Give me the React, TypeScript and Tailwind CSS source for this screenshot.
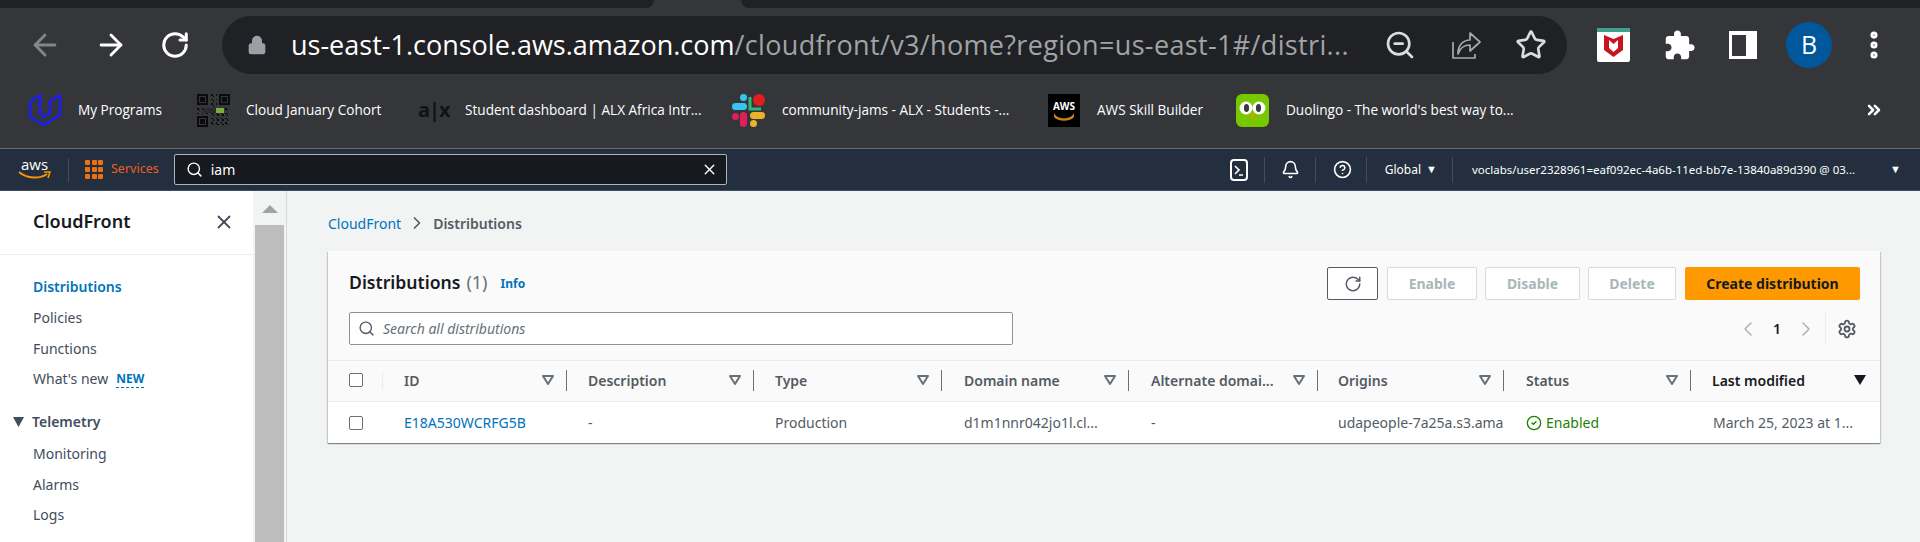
import React from 'react';
import { ArrowLeft, ArrowRight, RotateCw, Lock, ZoomOut, Star, EllipsisVertical, ChevronsRight, Search, X, Bell, CircleHelp, ChevronRight, ChevronLeft, Settings, CircleCheck } from 'lucide-react';

const UdacityIcon = () => (
  <svg width="34" height="34" viewBox="0 0 34 34" fill="none" stroke="#1a1cff" strokeWidth="2.4" strokeLinejoin="round">
    <path d="M12 2 L2 9 V24 L16 32 L32 22 V2 L22 8 V20 L16 24 L12 20 Z" />
  </svg>
);

const qrSize = 21;
const isFinder = (x: number, y: number, ox: number, oy: number) => {
  const dx = x - ox;
  const dy = y - oy;
  if (dx < 0 || dy < 0 || dx > 6 || dy > 6) return false;
  return dx === 0 || dy === 0 || dx === 6 || dy === 6 || (dx >= 2 && dx <= 4 && dy >= 2 && dy <= 4);
};

const QrIcon = () => {
  const cells: React.ReactNode[] = [];
  for (let y = 0; y < qrSize; y++) {
    for (let x = 0; x < qrSize; x++) {
      const inFinderZone = (x < 8 && y < 8) || (x > 12 && y < 8) || (x < 8 && y > 12);
      const on = inFinderZone
        ? isFinder(x, y, 0, 0) || isFinder(x, y, 14, 0) || isFinder(x, y, 0, 14)
        : (x * 7 + y * 13 + x * y) % 3 === 0;
      if (on) cells.push(<rect key={x + '-' + y} x={x} y={y} width="1" height="1" fill="#0b0b0b" />);
    }
  }
  return (
    <svg width="33" height="33" viewBox="0 0 21 21" shapeRendering="crispEdges">
      {cells}
      <rect x="4" y="9" width="8" height="3" fill="#2a2b2e" />
      <rect x="12" y="9" width="5" height="3" fill="#7fae3e" />
    </svg>
  );
};

const SlackIcon = () => (
  <svg width="33" height="33" viewBox="0 0 33 33">
    <rect x="0" y="9" width="15" height="7" rx="3.5" fill="#36c5f0" />
    <rect x="8" y="0" width="7" height="7" rx="3.5" fill="#36c5f0" />
    <circle cx="27" cy="6" r="6" fill="#e01e1e" />
    <path d="M18 3 V15 H29" fill="none" stroke="#2eb67d" strokeWidth="3" />
    <rect x="0" y="19" width="7" height="7" rx="3.5" fill="#e01e5a" />
    <rect x="8" y="18" width="7" height="15" rx="3.5" fill="#e01e5a" />
    <rect x="18" y="18" width="15" height="7" rx="3.5" fill="#ecb22e" />
    <rect x="18" y="26" width="7" height="7" rx="3.5" fill="#ecb22e" />
  </svg>
);

const SkillIcon = () => (
  <div className="w-[32px] h-[33px] bg-black flex flex-col items-center justify-center">
    <span className="text-[10px] leading-[12px] font-bold text-white">AWS</span>
    <svg width="22" height="9" viewBox="0 0 22 9"><path d="M1 1 C4 8 18 8 21 1 V5 C17 10 5 10 1 5 Z" fill="#c9821c" /></svg>
  </div>
);

const DuoIcon = () => (
  <svg width="33" height="33" viewBox="0 0 33 33">
    <rect width="33" height="33" rx="6" fill="#78c800" />
    <circle cx="10" cy="14" r="6.5" fill="#fff" />
    <circle cx="23" cy="14" r="6.5" fill="#fff" />
    <ellipse cx="10.5" cy="14" rx="2.6" ry="4" fill="#3c3c3c" />
    <ellipse cx="22.5" cy="14" rx="2.6" ry="4" fill="#3c3c3c" />
    <path d="M14 20 H19 L16.5 25 Z" fill="#f49000" />
  </svg>
);

const McAfeeIcon = () => (
  <div className="w-[33px] h-[34px] bg-white rounded-[2px] flex flex-col items-center overflow-hidden">
    <div className="w-full h-[4px] bg-[#3f9f8a]" />
    <svg width="19" height="22" viewBox="0 0 19 22" className="mt-[3px]">
      <path d="M0 0 L9.5 4 L19 0 V15 L9.5 22 L0 15 Z" fill="#c8141e" />
      <path d="M5 5 L9.5 9 L14 5 V13 L9.5 17 L5 13 Z" fill="#fff" />
    </svg>
  </div>
);

const ShareIcon = () => (
  <svg width="32" height="32" viewBox="0 0 32 32" fill="none" stroke="#a7a9ac" strokeWidth="1.7" strokeLinejoin="round">
    <path d="M3 13 V29 H25 V25" />
    <path d="M8 25 C8 15 14 11 20 11 V4 L30 13 L20 22 V16 C14 16 10 19 8 25 Z" />
  </svg>
);

const PuzzleIcon = () => (
  <svg width="33" height="33" viewBox="0 0 24 24" fill="#fff">
    <path d="M20.5 11H19V7c0-1.1-.9-2-2-2h-4V3.5C13 2.12 11.88 1 10.5 1S8 2.12 8 3.5V5H4c-1.1 0-1.99.9-1.99 2v3.8H3.5c1.49 0 2.7 1.21 2.7 2.7s-1.21 2.7-2.7 2.7H2V20c0 1.1.9 2 2 2h3.8v-1.5c0-1.49 1.21-2.7 2.7-2.7 1.49 0 2.7 1.21 2.7 2.7V22H17c1.1 0 2-.9 2-2v-4h1.5c1.38 0 2.5-1.12 2.5-2.5S21.88 11 20.5 11z" />
  </svg>
);

const AwsLogo = () => (
  <div className="w-[33px] flex flex-col items-center">
    <span className="text-[15px] leading-[13px] text-white font-['Open_Sans',sans-serif]">aws</span>
    <svg width="33" height="10" viewBox="0 0 33 10">
      <path d="M1 1 C9 8 22 8 29 3" fill="none" stroke="#f79400" strokeWidth="2" />
      <path d="M26 1 L32 1 L30 7" fill="none" stroke="#f79400" strokeWidth="1.6" />
    </svg>
  </div>
);

const Bookmark = ({ icon, label, iconBox, gap }: { icon: React.ReactNode; label: string; iconBox: string; gap: string }) => (
  <div className={`flex items-center ${iconBox}`}>
    {icon}
    <span className={`${gap} text-[13.6px] text-white whitespace-nowrap`}>{label}</span>
  </div>
);

const NavSep = () => <div className="w-px h-[26px] bg-[#414d5c]" />;

const SideItem = ({ label, cls }: { label: string; cls: string }) => (
  <div className={`pl-[33px] text-[14px] text-[#414d5c] ${cls}`}>{label}</div>
);

const FilterCaret = () => (
  <svg width="12" height="10" viewBox="0 0 12 10" className="shrink-0">
    <path d="M1 1 H11 L6 9 Z" fill="none" stroke="#687078" strokeWidth="2" strokeLinejoin="round" />
  </svg>
);

const columns = [
  { label: 'Description', width: 'w-[187px]', pad: 'pl-[21px]' },
  { label: 'Type', width: 'w-[188px]', pad: 'pl-[21px]' },
  { label: 'Domain name', width: 'w-[187px]', pad: 'pl-[22px]' },
  { label: 'Alternate domai...', width: 'w-[189px]', pad: 'pl-[22px]' },
  { label: 'Origins', width: 'w-[186px]', pad: 'pl-[20px]' },
  { label: 'Status', width: 'w-[187px]', pad: 'pl-[22px]' },
];

const PillButton = ({ label, width }: { label: string; width: string }) => (
  <div className={`${width} h-[33px] rounded-[2px] border border-[#d5dbdb] bg-white flex items-center justify-center text-[14px] font-bold text-[#aab7b8]`}>{label}</div>
);

export default function App() {
  return (
    <div className="w-[1920px] h-[542px] overflow-hidden flex flex-col bg-[#f2f3f3] font-['Noto_Sans',sans-serif]">
      {/* browser chrome */}
      <div className="h-[149px] bg-[#35363a] border-b border-[#6b6c70] font-['Open_Sans',sans-serif] shrink-0">
        <div className="h-[8px] flex">
          <div className="w-[654px] bg-[#202124] rounded-br-[10px]" />
          <div className="flex-1 ml-[87px] bg-[#202124] rounded-bl-[10px]" />
        </div>
        <div className="h-[66px] pt-[8px] flex items-center">
          <div className="w-[222px] flex items-center shrink-0 pl-[28px]">
            <ArrowLeft size={34} className="text-[#85868a]" strokeWidth={2} />
            <ArrowRight size={34} className="text-white ml-[32px]" strokeWidth={2} />
            <RotateCw size={30} className="text-white ml-[32px]" strokeWidth={2.4} />
          </div>
          <div className="w-[1345px] h-[58px] rounded-full bg-[#202124] flex items-center pl-[25px] shrink-0">
            <Lock size={20} className="text-[#9aa0a6]" fill="#9aa0a6" />
            <span className="ml-[24px] text-[27px] tracking-[0.35px] whitespace-nowrap w-[1067px] text-[#a0a3a7]"><span className="text-white tracking-normal">us-east-1.console.aws.amazon.com</span>/cloudfront/v3/home?region=us-east-1#/distri...</span>
            <ZoomOut size={32} className="text-[#dadce0] ml-[26px]" strokeWidth={2} />
            <div className="ml-[34px]"><ShareIcon /></div>
            <Star size={32} className="text-[#dadce0] ml-[33px]" strokeWidth={2} />
          </div>
          <div className="ml-[30px]"><McAfeeIcon /></div>
          <div className="ml-[33px]"><PuzzleIcon /></div>
          <div className="ml-[33px] w-[28px] h-[28px] bg-white flex items-center"><div className="ml-[3px] w-[14px] h-[21px] bg-[#35363a]" /></div>
          <div className="ml-[29px] w-[46px] h-[46px] rounded-full bg-[#01579b] flex items-center justify-center text-white text-[25px]">B</div>
          <EllipsisVertical size={34} className="text-white ml-[25px]" strokeWidth={3} />
        </div>
        <div className="h-[74px] pb-[2px] flex items-center pl-[28px]">
          <Bookmark icon={<UdacityIcon />} label="My Programs" iconBox="w-[169px]" gap="ml-[16px]" />
          <Bookmark icon={<QrIcon />} label="Cloud January Cohort" iconBox="w-[221px]" gap="ml-[16px]" />
          <Bookmark icon={<span className="w-[29px] text-[#111214] text-[20px] font-bold tracking-[-1px]">a|x</span>} label="Student dashboard | ALX Africa Intr..." iconBox="w-[314px]" gap="ml-[18px]" />
          <Bookmark icon={<SlackIcon />} label="community-jams - ALX - Students -..." iconBox="w-[316px]" gap="ml-[17px]" />
          <Bookmark icon={<SkillIcon />} label="AWS Skill Builder" iconBox="w-[188px]" gap="ml-[17px]" />
          <Bookmark icon={<DuoIcon />} label="Duolingo - The world's best way to..." iconBox="w-[400px]" gap="ml-[17px]" />
          <ChevronsRight size={20} className="text-white ml-[228px]" strokeWidth={3} />
        </div>
      </div>

      {/* aws nav */}
      <div className="h-[42px] bg-[#232f3e] border-b border-[#414d5c] flex items-center shrink-0 text-white">
        <div className="ml-[18px]"><AwsLogo /></div>
        <div className="ml-[17px] w-px h-[24px] bg-[#414d5c]" />
        <div className="ml-[16px] grid grid-cols-3 gap-[2px] w-[18px]">
          {Array.from({ length: 9 }).map((_, i) => <div key={i} className="w-[5px] h-[5px] bg-[#ec7211] rounded-[1px]" />)}
        </div>
        <span className="ml-[8px] text-[12.5px] text-[#ec5f24]">Services</span>
        <div className="ml-[15px] w-[553px] h-[31px] rounded-[2px] border border-[#aab7b8] bg-[#16191f] flex items-center pl-[11px] pr-[8px]">
          <Search size={17} className="text-white" strokeWidth={2} />
          <span className="ml-[8px] text-[14px] flex-1">iam</span>
          <X size={17} className="text-white" strokeWidth={2} />
        </div>
        <div className="ml-[503px] flex items-center">
          <svg width="18" height="22" viewBox="0 0 18 22" fill="none" stroke="#fff" strokeWidth="2">
            <rect x="1" y="1" width="16" height="20" rx="3" />
            <path d="M5 7 L9 11 L5 15 M9 16 H13" strokeWidth="1.6" />
          </svg>
          <div className="ml-[16px]"><NavSep /></div>
          <Bell size={19} className="ml-[16px]" strokeWidth={2} />
          <div className="ml-[15px]"><NavSep /></div>
          <CircleHelp size={19} className="ml-[17px]" strokeWidth={2} />
          <div className="ml-[14px]"><NavSep /></div>
          <span className="ml-[18px] text-[12px]">Global</span>
          <span className="ml-[5px] text-[11px]">▼</span>
          <div className="ml-[15px]"><NavSep /></div>
          <span className="ml-[19px] text-[11.5px] w-[414px] whitespace-nowrap">voclabs/user2328961=eaf092ec-4a6b-11ed-bb7e-13840a89d390 @ 03...</span>
          <span className="ml-[4px] text-[11px]">▼</span>
        </div>
      </div>

      {/* console body */}
      <div className="flex-1 flex min-h-0">
        <div className="w-[253px] bg-white shrink-0 flex flex-col">
          <div className="h-[64px] pb-[2px] border-b border-[#eaeded] pl-[33px] pr-[18px] flex items-center justify-between">
            <span className="text-[18px] font-semibold text-[#16191f]">CloudFront</span>
            <X size={22} className="text-[#414d5c]" strokeWidth={2} />
          </div>
          <div className="pl-[33px] mt-[22px] text-[14px] font-semibold text-[#0073bb] leading-[20px]">Distributions</div>
          <SideItem label="Policies" cls="mt-[11px] leading-[20px]" />
          <SideItem label="Functions" cls="mt-[11px] leading-[20px]" />
          <div className="pl-[33px] mt-[10px] flex items-center leading-[20px] text-[14px] text-[#414d5c]">
            What's new
            <span className="ml-[8px] text-[12px] font-bold text-[#0073bb] border-b border-dashed border-[#0073bb] leading-[17px]">NEW</span>
          </div>
          <div className="pl-[13px] mt-[23px] flex items-center leading-[20px] text-[14px] font-semibold text-[#414d5c]">
            <svg width="11" height="10" viewBox="0 0 11 10" className="mr-[8px]"><path d="M0 0 H11 L5.5 10 Z" fill="#414d5c" /></svg>
            Telemetry
          </div>
          <SideItem label="Monitoring" cls="mt-[12px] leading-[20px]" />
          <SideItem label="Alarms" cls="mt-[11px] leading-[20px]" />
          <SideItem label="Logs" cls="mt-[10px] leading-[20px]" />
        </div>
        <div className="w-[34px] shrink-0 bg-[#f2f3f3] border-r border-[#d5dbdb] pl-[2px] pr-[2px] flex flex-col">
          <div className="h-[34px] flex justify-center pt-[14px]">
            <svg width="16" height="8" viewBox="0 0 16 8"><path d="M8 0 L16 8 H0 Z" fill="#a3a3a3" /></svg>
          </div>
          <div className="flex-1 bg-[#bdbdbd]" />
        </div>
        <div className="flex-1 pl-[41px] pr-[40px]">
          <div className="h-[60px] flex items-center pt-[4px] text-[14px]">
            <span className="text-[#0073bb]">CloudFront</span>
            <ChevronRight size={20} className="text-[#545b64] mx-[6px]" />
            <span className="text-[#545b64] font-semibold">Distributions</span>
          </div>
          <div className="bg-white shadow-[0_1px_1px_0_rgba(0,28,36,0.3),1px_1px_1px_0_rgba(0,28,36,0.15),-1px_1px_1px_0_rgba(0,28,36,0.15)]">
            <div className="h-[110px] bg-[#fafafa] border-b border-[#eaeded] pl-[21px] pr-[20px] pt-[16px]">
              <div className="flex items-center h-[33px]">
                <span className="text-[17.6px] font-semibold text-[#16191f] -mt-[2px]">Distributions</span>
                <span className="ml-[6px] text-[18px] text-[#687078] -mt-[2px]">(1)</span>
                <span className="ml-[13px] text-[12px] font-bold text-[#0073bb]">Info</span>
                <div className="ml-auto flex items-center gap-[8px]">
                  <div className="w-[51px] h-[33px] mr-[1px] rounded-[2px] border border-[#545b64] bg-white flex items-center justify-center">
                    <RotateCw size={18} className="text-[#545b64]" />
                  </div>
                  <PillButton label="Enable" width="w-[90px]" />
                  <PillButton label="Disable" width="w-[95px]" />
                  <PillButton label="Delete" width="w-[88px] mr-[1px]" />
                  <div className="w-[175px] h-[33px] rounded-[2px] bg-[#ff9900] flex items-center justify-center text-[14px] font-bold text-[#16191f]">Create distribution</div>
                </div>
              </div>
              <div className="flex items-center h-[33px] mt-[12px]">
                <div className="w-[664px] h-[33px] rounded-[2px] border border-[#879596] bg-white flex items-center pl-[8px]">
                  <Search size={17} className="text-[#545b64]" strokeWidth={2} />
                  <span className="ml-[8px] text-[14px] italic text-[#687078]">Search all distributions</span>
                </div>
                <div className="ml-auto flex items-center pr-[3px]">
                  <ChevronLeft size={24} className="text-[#aab7b8]" strokeWidth={1.6} />
                  <span className="mx-[13px] text-[14px] text-[#16191f] font-semibold">1</span>
                  <ChevronRight size={24} className="text-[#aab7b8]" strokeWidth={1.6} />
                  <div className="ml-[7px] w-px h-[33px] bg-[#eaeded]" />
                  <Settings size={20} className="ml-[11px] text-[#545b64]" strokeWidth={2.2} />
                </div>
              </div>
            </div>
            <div className="h-[41px] pb-[2px] bg-[#fafafa] border-b border-[#eaeded] flex items-center pl-[21px] text-[14px] font-semibold text-[#545b64]">
              <div className="w-[14px] h-[14px] rounded-[2px] border border-[#687078] bg-white shrink-0" />
              <div className="ml-[19px] w-px h-[19px] bg-[#eaeded] shrink-0" />
              <div className="flex items-center pl-[21px] w-[184px] pr-[12px] justify-between border-r border-[#687078]">
                <span>ID</span><FilterCaret />
              </div>
              {columns.map(c => (
                <div key={c.label} className={`flex items-center ${c.pad} ${c.width} pr-[12px] justify-between border-r border-[#687078] whitespace-nowrap`}>
                  <span>{c.label}</span><FilterCaret />
                </div>
              ))}
              <div className="flex items-center pl-[21px] flex-1 pr-[14px] justify-between text-[#16191f]">
                <span>Last modified</span>
                <svg width="12" height="10" viewBox="0 0 12 10"><path d="M0 0 H12 L6 10 Z" fill="#16191f" /></svg>
              </div>
            </div>
            <div className="h-[41px] flex items-center pl-[21px] text-[14px] text-[#545b64]">
              <div className="w-[14px] h-[14px] rounded-[2px] border border-[#687078] bg-white shrink-0" />
              <div className="ml-[20px] pl-[21px] w-[184px] text-[#0073bb]">E18A530WCRFG5B</div>
              <div className="pl-[21px] w-[187px]">-</div>
              <div className="pl-[21px] w-[188px]">Production</div>
              <div className="pl-[22px] w-[187px]">d1m1nnr042jo1l.cl...</div>
              <div className="pl-[22px] w-[189px]">-</div>
              <div className="ml-[20px] w-[166px] overflow-hidden whitespace-nowrap">udapeople-7a25a.s3.amazonaws.com</div>
              <div className="pl-[22px] w-[187px] flex items-center text-[#1d8102]">
                <CircleCheck size={16} strokeWidth={2} />
                <span className="ml-[4px]">Enabled</span>
              </div>
              <div className="pl-[22px] flex-1 whitespace-nowrap">March 25, 2023 at 1...</div>
            </div>
          </div>
        </div>
      </div>
    </div>
  );
}
